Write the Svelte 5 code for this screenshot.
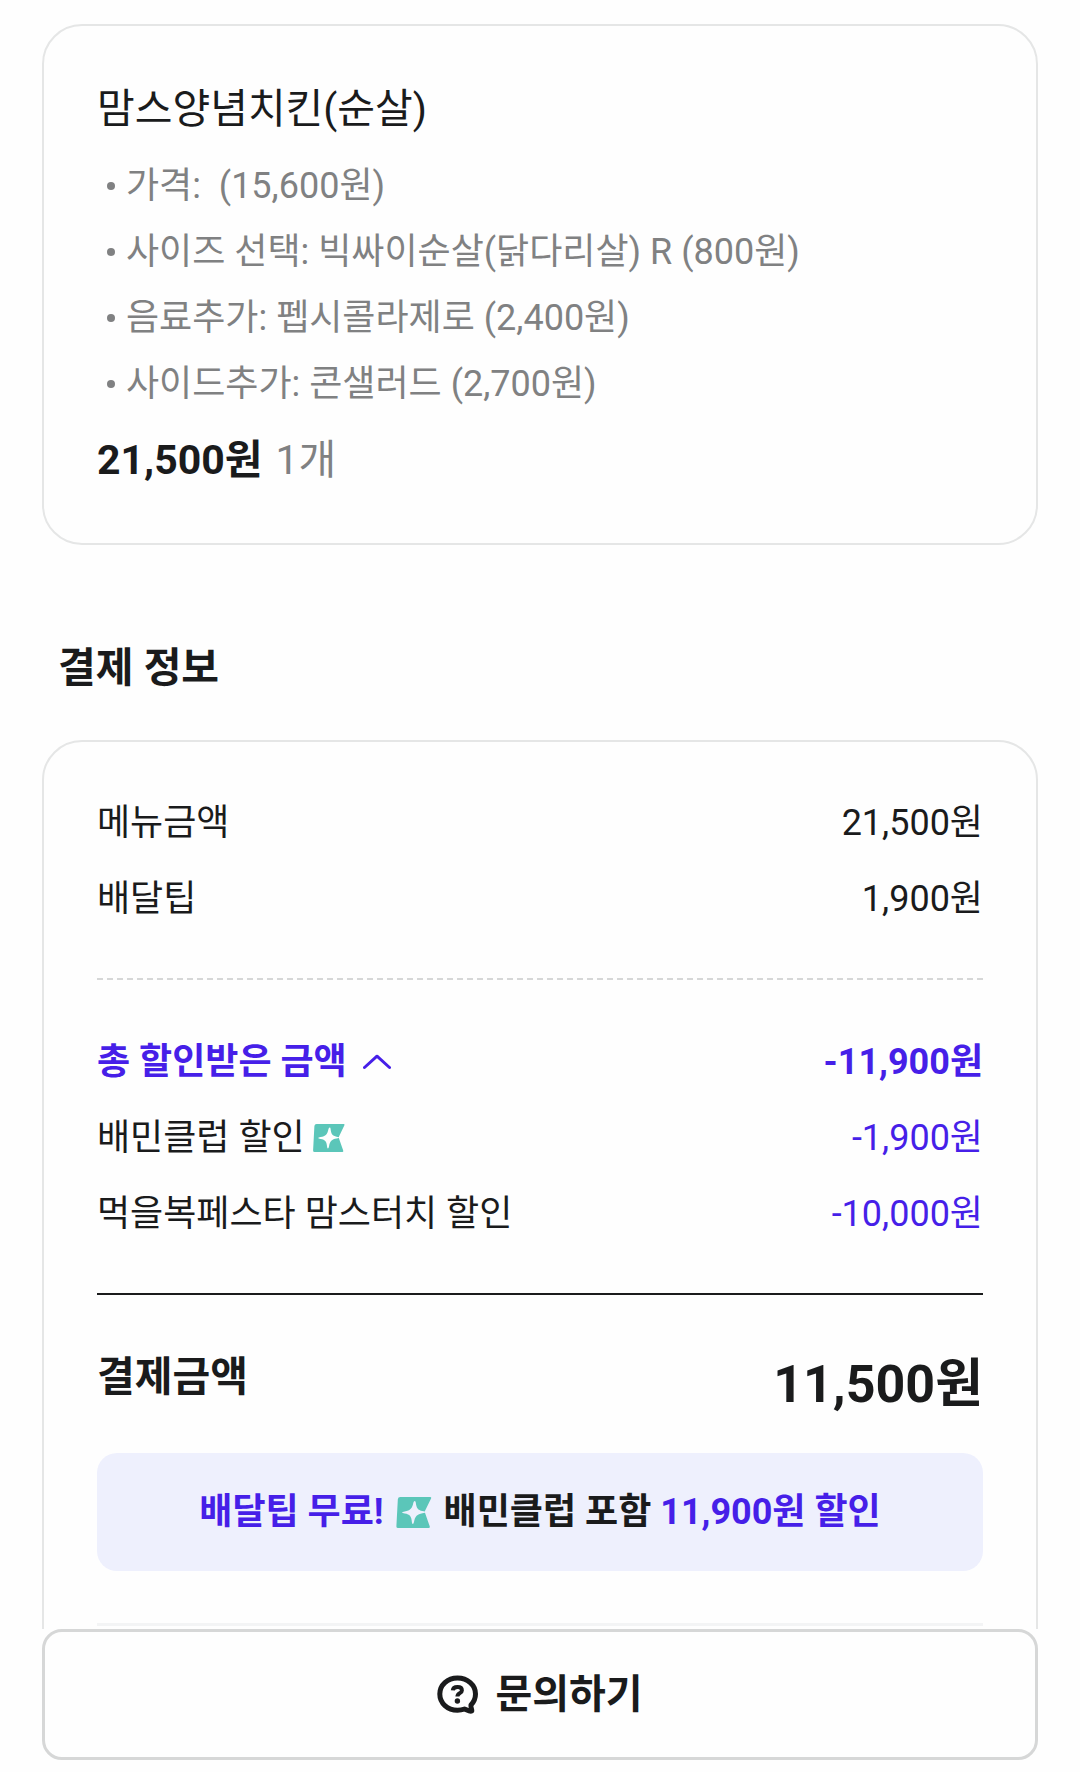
<script>
	const menu = {
		name: '맘스양념치킨(순살)',
		options: [
			'가격:\u00a0 (15,600원)',
			'사이즈 선택: 빅싸이순살(닭다리살) R (800원)',
			'음료추가: 펩시콜라제로 (2,400원)',
			'사이드추가: 콘샐러드 (2,700원)'
		],
		price: '21,500원',
		count: '1개'
	};

	const charges = [
		{ label: '메뉴금액', amount: '21,500원' },
		{ label: '배달팁', amount: '1,900원' }
	];

	const discounts = [
		{ label: '배민클럽 할인', amount: '-1,900원', club: true },
		{ label: '먹을복페스타 맘스터치 할인', amount: '-10,000원' }
	];

	let open = $state(true);
</script>

{#snippet club()}
	<svg class="club" viewBox="0 0 32 28" aria-hidden="true">
		<path
			fill="#5bc6b9"
			d="M3.6 0H30.6Q32 0 31.4 1.3L26 12.5Q25.6 13.5 26 14.5L30.2 26.5Q30.7 28 29.2 28H1.6Q0 28 .1 26.4L1.4 2Q1.6 0 3.6 0Z"
		/>
		<path
			class="star"
			d="M16.7 3.6Q17.5 3.6 17.6 5C18.2 10 19.4 11.9 23.6 12.7Q26.5 13 26.5 13.6Q26.5 14.3 23.6 14.6C18.8 15.4 17 17.3 16 22.5Q15.6 24.4 14.9 24.4Q14.2 24.4 14.1 22.8C13.7 17.6 12.4 15.6 7.6 14.9Q5.2 14.6 5.2 14Q5.2 13.4 7.6 13C12.8 12.1 14.4 10.2 15.4 5.2Q15.8 3.6 16.7 3.6Z"
		/>
	</svg>
{/snippet}

<div class="page">
	<main>
		<section class="card">
			<h2 class="menu-name">{menu.name}</h2>
			<ul>
				{#each menu.options as option}
					<li>{option}</li>
				{/each}
			</ul>
			<p class="price"><strong>{menu.price}</strong> <span>{menu.count}</span></p>
		</section>

		<h2 class="section-title">결제 정보</h2>

		<section class="card">
			<div class="rows">
				{#each charges as row}
					<div class="row">
						<span>{row.label}</span>
						<span>{row.amount}</span>
					</div>
				{/each}
			</div>

			<div class="dashed"></div>

			<div class="rows">
				<div class="row accent bold">
					<button class="toggle" aria-expanded={open} onclick={() => (open = !open)}>
						총 할인받은 금액
						<svg class:closed={!open} class="chevron" viewBox="0 0 28 16" aria-hidden="true">
							<path d="M1.5 13.5L14 2.2L26.5 13.5" />
						</svg>
					</button>
					<span>-11,900원</span>
				</div>
				{#if open}
					{#each discounts as row}
						<div class="row">
							<span class="label">
								{row.label}
								{#if row.club}{@render club()}{/if}
							</span>
							<span class="accent">{row.amount}</span>
						</div>
					{/each}
				{/if}
			</div>

			<div class="total">
				<span>결제금액</span>
				<strong>11,500원</strong>
			</div>

			<p class="benefit">
				<span class="accent">배달팁 무료!</span>
				{@render club()}
				<span>배민클럽 포함 <span class="accent">11,900원 할인</span></span>
			</p>

			<div class="divider"></div>
		</section>
	</main>

	<footer>
		<button class="ask">
			<svg viewBox="0 0 42 40" aria-hidden="true">
				<path
					class="bubble"
					d="M20.5 3C30.5 3 38.5 10 38.5 19C38.5 23.4 36.8 27 34 30C33.4 32.3 35 34 34.8 36C32.6 36.8 30 35 27.5 34C25.3 34.8 23 35.2 20.5 35.2C10.5 35.2 2.8 28.2 2.8 19C2.8 10 10.5 3 20.5 3Z"
				/>
				<path class="mark" d="M15.8 15.4C16 12.9 18 12 20.5 12C23.2 12 24.9 13.3 24.9 15.4C24.9 18.4 20.4 18 20.4 21.6" />
				<circle cx="20.4" cy="26" r="2.7" />
			</svg>
			문의하기
		</button>
	</footer>
</div>

<style>
	:global(body) {
		margin: 0;
		background: #fefefe;
	}
	.page {
		display: flex;
		flex-direction: column;
		height: 100vh;
		color: #1a1b1c;
		font-family: Roboto, 'Noto Sans CJK KR', sans-serif;
		font-size: 36px;
		line-height: 56px;
	}
	main {
		flex: 1;
		min-height: 0;
		overflow-y: auto;
		scrollbar-width: none;
		padding: 24px 42px 0;
	}
	h2, p, ul {
		margin: 0;
		padding: 0;
	}
	button {
		border: none;
		background: none;
		padding: 0;
		color: inherit;
		font: inherit;
		cursor: pointer;
	}
	strong {
		font-weight: 700;
	}
	.card {
		border: 2px solid #e5e6e6;
		border-radius: 40px;
		padding: 53px;
	}
	.menu-name {
		font-size: 41px;
		font-weight: 400;
		line-height: 60px;
	}
	ul {
		margin: 14px 0 13px;
		list-style: none;
		color: #808182;
		line-height: 66px;
	}
	li {
		display: flex;
		align-items: center;
		gap: 11px;
		padding-left: 10px;
	}
	li::before {
		content: '';
		width: 8px;
		height: 8px;
		border-radius: 50%;
		background: #808182;
	}
	.price {
		display: flex;
		gap: 13px;
		font-size: 41px;
		line-height: 60px;
	}
	.price span {
		color: #808182;
	}
	.section-title {
		margin: 93px 16px 42px;
		font-size: 41px;
		font-weight: 700;
		line-height: 60px;
	}
	.rows {
		display: flex;
		flex-direction: column;
		gap: 20px;
	}
	.row {
		display: flex;
		justify-content: space-between;
	}
	.label, .toggle {
		display: flex;
		align-items: center;
	}
	.label {
		gap: 8px;
	}
	.toggle {
		gap: 16px;
	}
	.accent {
		color: #461fe8;
	}
	.bold {
		font-weight: 700;
	}
	.dashed {
		height: 2px;
		margin: 51px 0 54px;
		background: repeating-linear-gradient(90deg, #d6d7d7 0 6px, transparent 6px 10px);
	}
	.chevron {
		width: 28px;
		height: 16px;
		fill: none;
		stroke: currentColor;
		stroke-width: 3;
		stroke-linecap: round;
		stroke-linejoin: round;
	}
	.closed {
		transform: rotate(180deg);
	}
	.club {
		width: 32px;
		height: 28px;
	}
	.star {
		fill: #fefefe;
	}
	.total {
		display: flex;
		justify-content: space-between;
		margin-top: 51px;
		border-top: 2px solid #1a1b1c;
		padding: 52px 0 30px;
		font-size: 41px;
		font-weight: 700;
		line-height: 60px;
	}
	.total strong {
		font-size: 52px;
		line-height: 76px;
	}
	.benefit {
		display: flex;
		align-items: center;
		justify-content: center;
		gap: 12px;
		border-radius: 20px;
		padding: 31px 20px;
		background: #eef0fd;
		font-weight: 700;
	}
	.benefit .club {
		width: 36px;
		height: 31px;
	}
	.benefit .star {
		fill: #eef0fd;
	}
	.divider {
		height: 3px;
		margin-top: 52px;
		background: #f3f4f5;
	}
	footer {
		padding: 0 42px 12px;
	}
	.ask {
		display: flex;
		align-items: center;
		justify-content: center;
		gap: 16px;
		width: 100%;
		border: 3px solid #d6d7d7;
		border-radius: 20px;
		padding: 32px 20px;
		font-size: 40px;
		font-weight: 700;
		line-height: 61px;
	}
	.ask svg {
		width: 42px;
		height: 40px;
	}
	.bubble, .mark {
		fill: none;
		stroke: currentColor;
		stroke-width: 5;
		stroke-linejoin: round;
	}
	.mark {
		stroke-width: 4;
	}
	.ask circle {
		fill: currentColor;
	}
</style>
